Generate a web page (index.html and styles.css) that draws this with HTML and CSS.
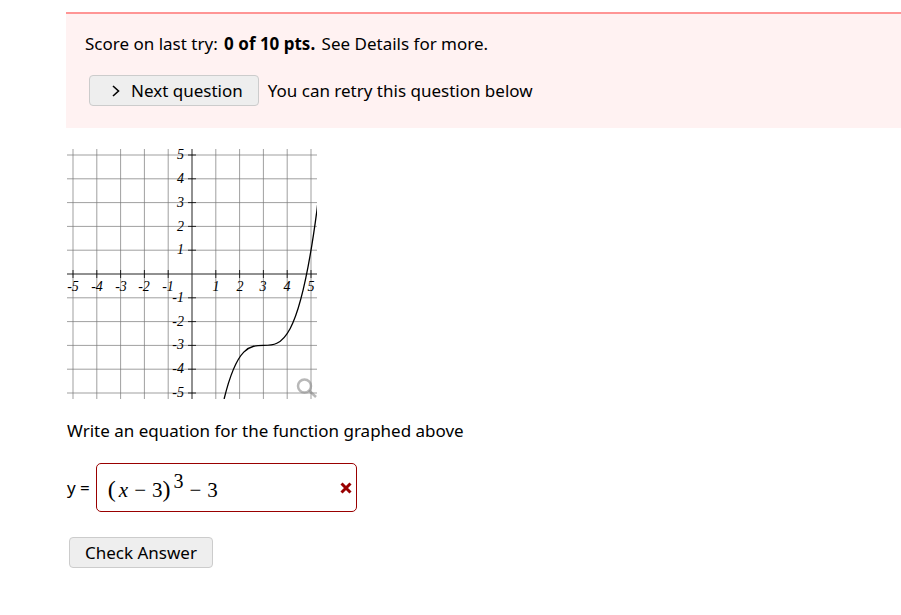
FILE: index.html
```html
<!DOCTYPE html>
<html lang="en">

<head>
    <meta charset="UTF-8">
    <meta name="viewport" content="width=device-width, initial-scale=1">
    <link rel="stylesheet" href="styles.css">
    <title>Question</title>
</head>

<body>
    <div class="scoreresult">
        <p>Score on last try: <b>0 of 10 pts.</b> See Details for more.</p>
        <div class="retry">
            <button type="button" class="btn next">
                <svg class="chevron" width="8" height="12" viewBox="0 0 8 12" aria-hidden="true"><path d="M1 1 L6.5 6 L1 11" /></svg>
                Next question
            </button>
            <span>You can retry this question below</span>
        </div>
    </div>

    <form class="question" onsubmit="return false">
        <div class="graph">
            <svg width="250" height="250" viewBox="0 0 250 250" role="img" aria-label="Graph of a cubic function">
                <!-- one unit is 23.8px, origin at 125,125 -->
                <path class="grid" d="M6 0V250 M29.8 0V250 M53.6 0V250 M77.4 0V250 M101.2 0V250 M148.8 0V250 M172.6 0V250 M196.4 0V250 M220.2 0V250 M244 0V250
                    M0 6H250 M0 29.8H250 M0 53.6H250 M0 77.4H250 M0 101.2H250 M0 148.8H250 M0 172.6H250 M0 196.4H250 M0 220.2H250 M0 244H250" />
                <path class="axis" d="M125 0V250 M0 125H250" />
                <path class="tick" d="M6 121V129 M29.8 121V129 M53.6 121V129 M77.4 121V129 M101.2 121V129 M148.8 121V129 M172.6 121V129 M196.4 121V129 M220.2 121V129 M244 121V129
                    M121 6H129 M121 29.8H129 M121 53.6H129 M121 77.4H129 M121 101.2H129 M121 148.8H129 M121 172.6H129 M121 196.4H129 M121 220.2H129 M121 244H129" />
                <g class="xlabels">
                    <text x="6" y="142">-5</text>
                    <text x="30" y="142">-4</text>
                    <text x="54" y="142">-3</text>
                    <text x="77" y="142">-2</text>
                    <text x="101" y="142">-1</text>
                    <text x="149" y="142">1</text>
                    <text x="173" y="142">2</text>
                    <text x="196" y="142">3</text>
                    <text x="220" y="142">4</text>
                    <text x="244" y="142">5</text>
                </g>
                <g class="ylabels">
                    <text x="117" y="10">5</text>
                    <text x="117" y="34">4</text>
                    <text x="117" y="58">3</text>
                    <text x="117" y="82">2</text>
                    <text x="117" y="105">1</text>
                    <text x="117" y="153">-1</text>
                    <text x="117" y="177">-2</text>
                    <text x="117" y="200">-3</text>
                    <text x="117" y="224">-4</text>
                    <text x="117" y="248">-5</text>
                </g>
                <path class="curve" d="M157.1 250 C188.1 123.4 219 295.9 250 60.8 L250.8 54" />
                <g class="magnify">
                    <circle cx="237.5" cy="237" r="6.5" />
                    <path d="M242 241.5 L249 248" />
                </g>
            </svg>
        </div>

        <p>Write an equation for the function graphed above</p>

        <div class="answer">
            <span id="ylabel">y =</span>
            <div class="mathbox">
                <div class="mathfield" role="textbox" contenteditable="true" spellcheck="false" aria-labelledby="ylabel" aria-invalid="true"><span class="paren">(</span><i>x</i><span class="op">−</span>3<span class="paren">)</span><sup>3</sup><span class="op">−</span>3</div>
                <svg class="wrong" width="12" height="12" viewBox="0 0 12 12" role="img" aria-label="Incorrect"><path d="M1.5 1.5 L10.5 10.5 M10.5 1.5 L1.5 10.5" /></svg>
            </div>
        </div>

        <button type="submit" class="btn">Check Answer</button>
    </form>
</body>

</html>
```

FILE: styles.css
```css
body {
    margin: 12px 0 0 66px;
    background: #fff;
    color: #000;
    font: 17px/24px "Trebuchet MS", "Noto Sans", sans-serif;
}

p {
    margin: 0;
}

.scoreresult {
    padding: 18px 19px 22px;
    border-top: 2px solid #ff9595;
    background: #fff2f2;
}

.scoreresult b {
    margin: 0 2px;
    font-weight: bold;
}

.retry {
    display: flex;
    align-items: center;
    gap: 9px;
    margin-top: 19px;
    padding-left: 4px;
}

.btn {
    box-sizing: border-box;
    height: 31px;
    padding: 0 15px;
    border: 1px solid #ccc;
    border-radius: 4px;
    background: #eee;
    color: #000;
    font: inherit;
    line-height: 24px;
}

.btn:hover {
    background: #ddd;
}

.next {
    display: flex;
    align-items: center;
    gap: 11px;
    padding-left: 22px;
}

.chevron {
    fill: none;
    stroke: #000;
    stroke-width: 1.6;
}

.question {
    padding: 21px 1px;
}

.graph {
    margin-bottom: 20px;
}

.graph svg {
    display: block;
}

.grid {
    stroke: #777;
    stroke-width: 0.7;
}

.axis {
    stroke: #222;
    stroke-width: 1;
}

.tick {
    stroke: #000;
    stroke-width: 0.8;
}

.xlabels,
.ylabels {
    font: italic 14px "Times New Roman", "Liberation Serif", serif;
}

.xlabels {
    text-anchor: middle;
}

.ylabels {
    text-anchor: end;
}

.curve {
    fill: none;
    stroke: #000;
    stroke-width: 1.3;
}

.magnify {
    fill: none;
    stroke: #888;
    stroke-opacity: 0.6;
    stroke-width: 2.5;
}

.answer {
    display: flex;
    align-items: center;
    gap: 6px;
    margin: 20px 0 25px;
}

.mathbox {
    display: flex;
    align-items: center;
    box-sizing: border-box;
    width: 261px;
    height: 49px;
    padding: 0 4px 0 11px;
    border: 1px solid #900;
    border-radius: 5px;
}

.mathfield {
    flex: 1;
    padding-top: 4px;
    outline: none;
    font: 21px/28px "Liberation Serif", serif;
}

.mathfield .paren {
    font-size: 24px;
}

.mathfield i {
    margin-left: 3px;
}

.mathfield .op {
    margin: 0 6px;
}

.mathfield sup {
    margin-left: 3px;
    font-size: 20px;
    line-height: 0;
    vertical-align: 9px;
}

.wrong {
    fill: none;
    stroke: #900;
    stroke-width: 3;
}

.question .btn {
    margin-left: 2px;
}
```
